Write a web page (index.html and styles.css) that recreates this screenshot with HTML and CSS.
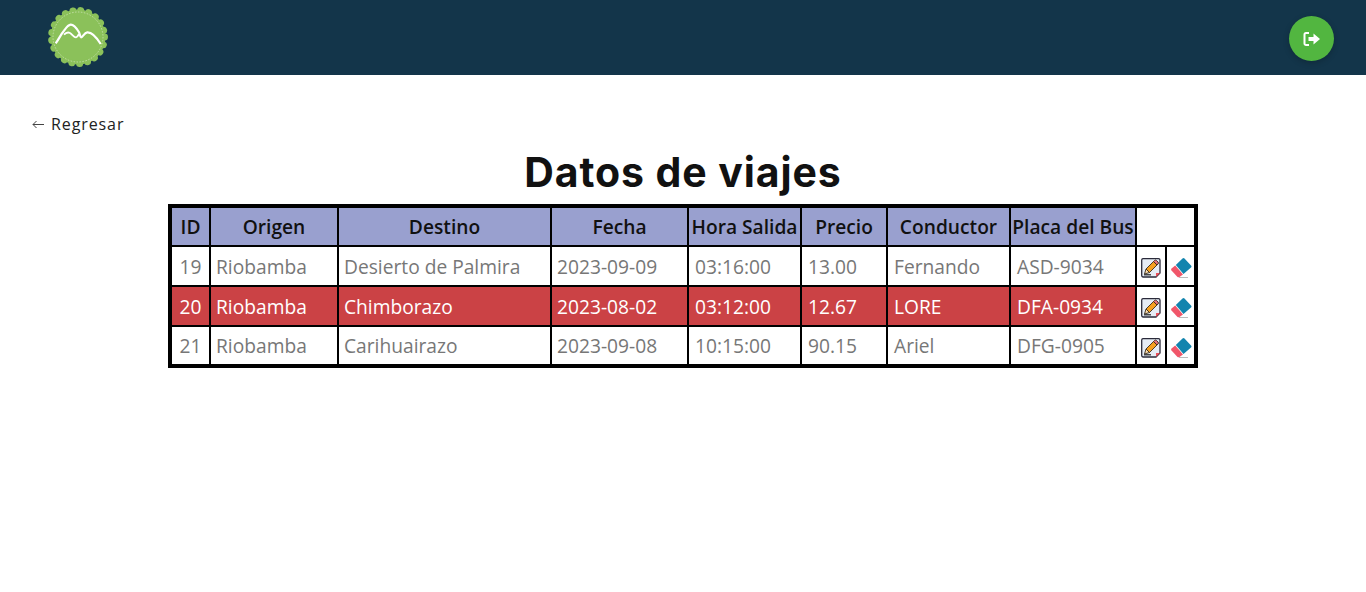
FILE: index.html
```html
<!DOCTYPE html>
<html>
<head>
    <title>Datos de viajes</title>
    <link rel="stylesheet" href="styles.css">
</head>
<body>
    <svg class="defs" width="0" height="0">
        <symbol id="edit" viewBox="0 0 20 20">
            <path d="M2 .7h15.500a1.500 1.500 0 0 1 1.500 1.500v12.800l-4 4H2a1.500 1.500 0 0 1-1.300-1.500V2A1.500 1.500 0 0 1 2 .7z" fill="#e6ecf5" stroke="#2a2a3a" stroke-width="1.300"/>
            <path d="M15 19v-4h4z" fill="#e8505b"/>
            <path d="M5 11l7.500-7.500 3.500 3.500-7.500 7.500z" fill="#f5a020" stroke="#3a2a1a" stroke-width=".9"/>
            <path d="M12.500 3.500l1-1a1.400 1.400 0 0 1 2 0l1.500 1.500a1.400 1.400 0 0 1 0 2l-1 1z" fill="#e8707a" stroke="#3a2a1a" stroke-width=".9"/>
            <path d="M5 11l-1.500 5 5-1.500z" fill="#f6dcb0" stroke="#3a2a1a" stroke-width=".9"/>
            <path d="M3 16.800h7" stroke="#222" stroke-width="1.200"/>
        </symbol>
        <symbol id="erase" viewBox="0 0 22 20">
            <path d="M4.800 7L11.500.5q1-.8 2 0L20 7.500q1 1 0 2L12.500 16z" fill="#1284ae"/>
            <path d="M4.200 7.500L12 16.500 8.500 19q-1 .6-2 0L.5 12.500q-.8-1 0-2z" fill="#f0566a"/>
            <path d="M8 19.500h9" stroke="#bbb" stroke-width="1"/>
        </symbol>
    </svg>

    <header class="topbar">
        <svg class="logo" viewBox="0 0 60 60" width="60" height="60">
            <circle cx="30" cy="30" r="27.500" fill="#8bc15a"/>
            <circle cx="30" cy="30" r="26.500" fill="none" stroke="#8bc15a" stroke-width="7" stroke-linecap="round" stroke-dasharray="0.010 7.920"/>
            <circle cx="30" cy="30" r="25" fill="none" stroke="#d5e8c0" stroke-width=".7" stroke-dasharray="1.500 1.500"/>
            <path d="M7.700 36.300 C11 32 13 27 16 23.700 C18 21 20 18 22.700 17.700 C26 17.500 29 22 31 25.300 C32 27 32 30 33 30.300 C35 30 36 25.800 39.300 25.300 C44 25 49 31 52.700 37" fill="none" stroke="#fff" stroke-width="2.200"/>
            <path d="M16 27.700 C18 25.500 20 25 22 26 C24 27 26 30.500 28 30.300 C29.500 30 30 29 31 27" fill="none" stroke="#fff" stroke-width="1.800"/>
        </svg>
        <a class="logout" href="#">
            <svg viewBox="0 0 18 16" width="18" height="16">
                <path d="M6 2H3a1.500 1.500 0 0 0-1.500 1.500v9A1.500 1.500 0 0 0 3 14h3" fill="none" stroke="#fff" stroke-width="2"/>
                <path d="M5.500 6h5V2.500L17 8l-6.500 5.500V10h-5z" fill="#fff"/>
            </svg>
        </a>
    </header>

    <main class="content">
        <a class="back" href="#">
            <svg viewBox="0 0 12 9" width="12" height="9"><path d="M12 4.500H1M4.500 1L1 4.500 4.500 8" fill="none" stroke="#444" stroke-width="1"/></svg>
            Regresar
        </a>
        <h1>Datos de viajes</h1>
        <table class="trips">
            <tr class="head">
                <th class="c-id">ID</th>
                <th class="c-origin">Origen</th>
                <th class="c-dest">Destino</th>
                <th class="c-date">Fecha</th>
                <th class="c-time">Hora Salida</th>
                <th class="c-price">Precio</th>
                <th class="c-driver">Conductor</th>
                <th class="c-plate">Placa del Bus</th>
                <th class="blank" colspan="2"></th>
            </tr>
            <tr>
                <td class="num">19</td><td>Riobamba</td><td>Desierto de Palmira</td><td>2023-09-09</td><td>03:16:00</td><td>13.00</td><td>Fernando</td><td>ASD-9034</td>
                <td class="action"><svg><use href="#edit"/></svg></td>
                <td class="action"><svg class="wide"><use href="#erase"/></svg></td>
            </tr>
            <tr class="alert">
                <td class="num">20</td><td>Riobamba</td><td>Chimborazo</td><td>2023-08-02</td><td>03:12:00</td><td>12.67</td><td>LORE</td><td>DFA-0934</td>
                <td class="action"><svg><use href="#edit"/></svg></td>
                <td class="action"><svg class="wide"><use href="#erase"/></svg></td>
            </tr>
            <tr class="last">
                <td class="num">21</td><td>Riobamba</td><td>Carihuairazo</td><td>2023-09-08</td><td>10:15:00</td><td>90.15</td><td>Ariel</td><td>DFG-0905</td>
                <td class="action"><svg><use href="#edit"/></svg></td>
                <td class="action"><svg class="wide"><use href="#erase"/></svg></td>
            </tr>
        </table>
    </main>
</body>
</html>
```
FILE: styles.css
```css
body {
    margin: 0;
    background: #fff;
    font-family: "Open Sans", sans-serif;
}
.defs {
    display: block;
    height: 0;
}
.topbar {
    height: 75px;
    background: #13354a;
    display: flex;
    justify-content: space-between;
    align-items: center;
    padding: 0 32px 0 48px;
}
.logo {
    display: block;
    margin-bottom: 1px;
}
.logout {
    width: 45px;
    height: 45px;
    margin-top: 2px;
    border-radius: 50%;
    background: #52b640;
    display: flex;
    align-items: center;
    justify-content: center;
    box-shadow: 0 2px 6px rgba(0, 0, 0, 0.2);
}
.content {
    padding: 38px 0 0;
}
.back {
    display: flex;
    align-items: center;
    gap: 7px;
    margin-left: 32px;
    font-size: 16px;
    line-height: 22px;
    letter-spacing: 0.9px;
    color: #222;
    text-decoration: none;
}
h1 {
    margin: 13px 0 8px;
    text-align: center;
    font-family: Inter, sans-serif;
    font-size: 41px;
    line-height: 48px;
    font-weight: 700;
    letter-spacing: 0.9px;
    color: #111;
}
.trips {
    width: 1030px;
    margin: 0 auto;
    border: 4px solid #000;
    border-collapse: collapse;
    table-layout: fixed;
}
th, td {
    border: 2px solid #000;
    font-size: 19.2px;
    padding: 0;
    height: 38px;
    white-space: nowrap;
}
th {
    background: #99a0cf;
    color: #111;
    font-weight: 600;
    text-align: center;
}
td {
    color: #777;
    padding-left: 5px;
}
td:nth-child(n+5) {
    padding-left: 6px;
}
.head th {
    height: 37px;
}
.last td {
    height: 37px;
}
.trips .blank {
    background: #fff;
    border-top: 0;
    border-right: 0;
}
.c-id { width: 37px; }
.c-origin { width: 126px; }
.c-dest { width: 211px; }
.c-date { width: 135px; }
.c-time { width: 111px; }
.c-price { width: 84px; }
.c-driver { width: 121px; }
.c-plate { width: 124px; }
.num {
    padding-left: 0;
    text-align: center;
}
.alert td {
    background: #cb4245;
    color: #fff;
}
.alert td.action {
    background: #fff;
}
td.action {
    padding: 0;
    text-align: center;
}
.action svg {
    display: block;
    width: 20px;
    height: 20px;
    margin: 4px auto 0;
}
.action svg.wide {
    width: 22px;
    margin-left: 4px;
}
```
